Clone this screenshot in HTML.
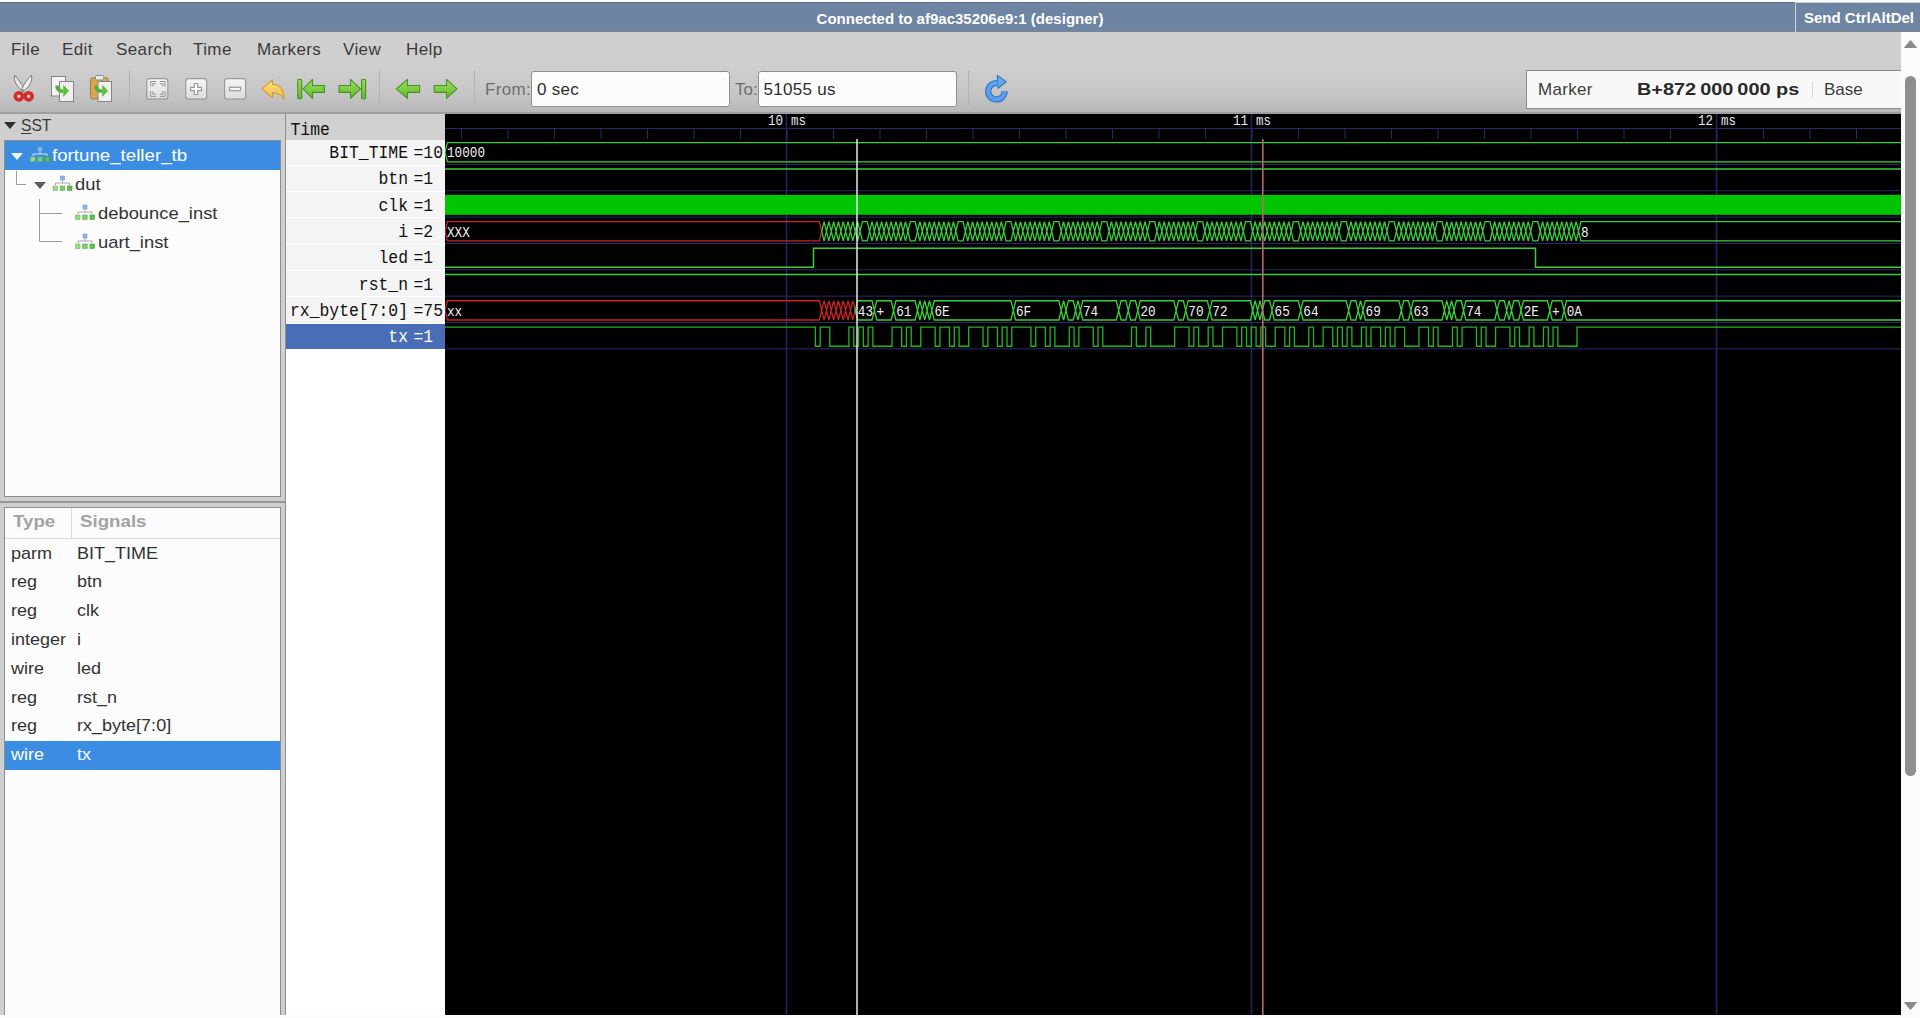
<!DOCTYPE html>
<html><head><meta charset="utf-8">
<style>
*{box-sizing:border-box}
html,body{margin:0;padding:0;width:1920px;height:1018px;overflow:hidden;background:#fbfbfb;font-family:"Liberation Sans",sans-serif}
.a{position:absolute}
#top{left:0;top:2px;width:1920px;height:30px;background:#6d84a3;border-top:1px solid #5b6f8c;border-bottom:1px solid #7d8593}
#title{left:0;top:3.5px;width:1920px;text-align:center;color:#fff;font-weight:bold;font-size:15px;line-height:30px}
#cad{left:1795px;top:2px;width:125px;height:30px;border-left:1px solid #c9d2de;border-top:1px solid #c9d2de;color:#fff;font-weight:bold;font-size:15px;line-height:29px;padding-left:8px}
#app{left:0;top:32px;width:1901px;height:983px;background:#cfcfcf;overflow:hidden}
#menu{left:0;top:0;width:1901px;height:34px;background:#cfcfcf}
.mi{top:6px;letter-spacing:0.4px;font-size:17px;color:#3a3a3a;line-height:24px}
#tb{left:0;top:34px;width:1901px;height:48px;background:linear-gradient(#cfcfcf,#c6c6c6 55%,#b8b8b8 96%,#9e9e9e 96%)}
.sepv{width:1px;background:#b4b4b4}
.entry{background:#fcfcfc;border:1px solid #8f8f8f;border-radius:3px;font-size:17px;color:#2e2e2e;line-height:36px;padding-left:5px;letter-spacing:0.3px}
.lbl{font-size:17px;color:#6d6d6d;line-height:24px}
#marker{left:1526px;top:38px;width:380px;height:39px;background:#f8f8f8;border:1px solid #8a8a8a;border-right:none}
/* left panes */
#sst{left:4px;top:81px;width:277px;height:27px;font-size:17px;color:#3a3a3a}
#tree{left:4px;top:108px;width:277px;height:357px;background:#fcfcfc;border:1px solid #8c8c8c;border-right:1px solid #8c8c8c}
.tr{font-size:17px;color:#333;line-height:24px;white-space:nowrap;transform:scaleX(1.08);transform-origin:0 0}
#sig{left:4px;top:474px;width:277px;height:509px;background:#fcfcfc;border:1px solid #8c8c8c}
.hdr{font-size:17px;color:#a3a3a3;font-weight:bold;transform:scaleX(1.1);transform-origin:0 0}
.srow{font-size:17px;color:#333;line-height:24px;transform:scaleX(1.06);transform-origin:0 0}
#names{left:286px;top:82px;width:159px;height:901px;background:#fff}
.nm{font-family:"Liberation Mono",monospace;font-size:16.4px;color:#111;white-space:pre;line-height:20px}
#wave{left:445px;top:82px;width:1456px;height:901px;background:#000}
svg text.bt{font-family:"Liberation Mono",monospace;font-size:12.7px;fill:#f0f0f0}
svg text.tl{font-family:"Liberation Mono",monospace;font-size:12.5px;fill:#e8e8e8}
#vs{left:1901px;top:32px;width:19px;height:986px;background:#fbfbfb}
</style></head><body>
<div id="top" class="a"></div>
<div id="title" class="a">Connected to af9ac35206e9:1 (designer)</div>
<div id="cad" class="a">Send CtrlAltDel</div>

<div id="app" class="a">
  <div id="menu" class="a">
    <div class="a mi" style="left:11px">File</div>
    <div class="a mi" style="left:62px">Edit</div>
    <div class="a mi" style="left:116px">Search</div>
    <div class="a mi" style="left:193px">Time</div>
    <div class="a mi" style="left:257px">Markers</div>
    <div class="a mi" style="left:343px">View</div>
    <div class="a mi" style="left:406px">Help</div>
  </div>
  <div id="tb" class="a">
    <svg class="a" style="left:0;top:0" width="1100" height="47" viewBox="0 66 1100 47"><defs><linearGradient id="gg" x1="0" y1="0" x2="0" y2="1"><stop offset="0" stop-color="#9be060"/><stop offset="1" stop-color="#62b82a"/></linearGradient><linearGradient id="zb" x1="0" y1="0" x2="0" y2="1"><stop offset="0" stop-color="#f6f6f6"/><stop offset="1" stop-color="#dcdcdc"/></linearGradient><linearGradient id="yb" x1="0" y1="0" x2="0" y2="1"><stop offset="0" stop-color="#fde08a"/><stop offset="1" stop-color="#f1b93a"/></linearGradient><linearGradient id="bl" x1="0" y1="0" x2="0" y2="1"><stop offset="0" stop-color="#7ab8f5"/><stop offset="1" stop-color="#3a86e0"/></linearGradient></defs><path d="M14.6 75.2C13.2 80.5 16.5 86.5 22.6 91.2L24.6 89.6C22.2 84.2 18.2 79 14.6 75.2Z" fill="#e4e4e4" stroke="#6f6f6f" stroke-width="0.9" stroke-linejoin="round"/><path d="M31.4 75.2C32.8 80.5 29.5 86.5 23.4 91.2L21.4 89.6C23.8 84.2 27.8 79 31.4 75.2Z" fill="#f0f0f0" stroke="#6f6f6f" stroke-width="0.9" stroke-linejoin="round"/><circle cx="23" cy="90.5" r="1.2" fill="#8a8a8a"/><circle cx="18.9" cy="96.3" r="3.6" fill="none" stroke="#d42a2a" stroke-width="3.6"/><circle cx="28.6" cy="96.3" r="3.6" fill="none" stroke="#d42a2a" stroke-width="3.6"/><circle cx="18.9" cy="96.3" r="1.3" fill="#f4c4c4"/><circle cx="28.6" cy="96.3" r="1.3" fill="#f4c4c4"/><rect x="51.5" y="76.5" width="14" height="19.5" fill="#f4f4f4" stroke="#858585"/><rect x="59.5" y="81.5" width="14" height="20" fill="#efefef" stroke="#858585"/><path d="M57 85.5Q57 91.2 63.2 91.2" fill="none" stroke="#4fb53a" stroke-width="3.6"/><path d="M63.6 85.6L68.7 90.9L63.6 96.2Z" fill="#5cc23a" stroke="#4a9f30" stroke-width="0.5" stroke-linejoin="round"/><rect x="90.5" y="78" width="17.5" height="20.8" rx="1.5" fill="#d9a550" stroke="#a57b3c"/><rect x="95.5" y="75.5" width="8.2" height="4.4" rx="1" fill="#ececec" stroke="#8a8a8a"/><rect x="98" y="81.5" width="13.5" height="20" fill="#efefef" stroke="#858585"/><path d="M96 85.5Q96 91.2 102.2 91.2" fill="none" stroke="#4fb53a" stroke-width="3.6"/><path d="M102.6 85.6L107.7 90.9L102.6 96.2Z" fill="#5cc23a" stroke="#4a9f30" stroke-width="0.5" stroke-linejoin="round"/><line x1="129.5" y1="70" x2="129.5" y2="107" stroke="#b2b2b2"/><line x1="379.5" y1="70" x2="379.5" y2="107" stroke="#b2b2b2"/><line x1="474.5" y1="70" x2="474.5" y2="107" stroke="#b2b2b2"/><line x1="968.5" y1="70" x2="968.5" y2="107" stroke="#b2b2b2"/><rect x="146.8" y="78.6" width="21" height="20.6" rx="2.8" fill="url(#zb)" stroke="#9a9a9a" stroke-width="1.2"/><path d="M151.8 86.6V82.6H156M159.9 82.6H164V86.6M164 91.2V95.3H159.9M156 95.3H151.8V91.2" fill="none" stroke="#8c8c8c" stroke-width="3.1" stroke-linejoin="miter"/><path d="M151.8 86.6V82.6H156M159.9 82.6H164V86.6M164 91.2V95.3H159.9M156 95.3H151.8V91.2" fill="none" stroke="#f6f6f6" stroke-width="1.1"/><rect x="185.7" y="78.6" width="21" height="20.6" rx="2.8" fill="url(#zb)" stroke="#9a9a9a" stroke-width="1.2"/><path d="M194.3 83.5H197.7V87.3H201.5V90.7H197.7V94.5H194.3V90.7H190.5V87.3H194.3Z" fill="#f8f8f8" stroke="#9a9a9a" stroke-width="1.2"/><rect x="224.6" y="78.6" width="21" height="20.6" rx="2.8" fill="url(#zb)" stroke="#9a9a9a" stroke-width="1.2"/><rect x="229.5" y="87.3" width="11" height="3.4" fill="#f8f8f8" stroke="#9a9a9a" stroke-width="1.2"/><path d="M262 88.6L272.5 79.8V84.3C279 84.3 284.5 89 283.8 99.3C282 94 278 92.8 272.5 92.8V98.2Z" fill="url(#yb)" stroke="#d39a24" stroke-width="1.1" stroke-linejoin="round"/><rect x="297.8" y="79.5" width="3.9" height="19.2" rx="0.8" fill="url(#gg)" stroke="#4b8f28" stroke-width="1.1"/><path d="M303 88.9L312.5 79.4V85.45H324.4V92.35000000000001H312.5V98.4Z" fill="url(#gg)" stroke="#4b8f28" stroke-width="1.1" stroke-linejoin="round"/><path d="M360.6 88.9L350.5 79.4V85.45H339V92.35000000000001H350.5V98.4Z" fill="url(#gg)" stroke="#4b8f28" stroke-width="1.1" stroke-linejoin="round"/><rect x="361.6" y="79.5" width="4" height="19.2" rx="0.8" fill="url(#gg)" stroke="#4b8f28" stroke-width="1.1"/><path d="M396.3 88.9L407.5 79.4V85.45H419.6V92.35000000000001H407.5V98.4Z" fill="url(#gg)" stroke="#4b8f28" stroke-width="1.1" stroke-linejoin="round"/><path d="M457 88.9L446.5 79.4V85.45H434.2V92.35000000000001H446.5V98.4Z" fill="url(#gg)" stroke="#4b8f28" stroke-width="1.1" stroke-linejoin="round"/><path d="M1004.6 91.3A8.2 8.2 0 1 1 997 83.1" fill="none" stroke="#3272c4" stroke-width="6.2"/><path d="M997.3 75.4L1006.2 81.7L998 88.2Z" fill="#66aaf0" stroke="#3272c4" stroke-width="1.1" stroke-linejoin="round"/><path d="M1004.6 91.3A8.2 8.2 0 1 1 997.5 83.1" fill="none" stroke="#5aa0ee" stroke-width="4"/></svg>
<div class="a lbl" style="left:485px;top:12px;letter-spacing:0.35px">From:</div>
<div class="a entry" style="left:531px;top:4.5px;width:199px;height:36px">0 sec</div>
<div class="a lbl" style="left:735px;top:12px">To:</div>
<div class="a entry" style="left:757.5px;top:4.5px;width:199px;height:36px">51055 us</div>
<div id="marker" class="a" style="top:4px">
  <div class="a lbl" style="left:11px;top:7px;color:#3c3c3c;letter-spacing:0.3px">Marker</div>
  <div class="a lbl" style="left:110px;top:7px;color:#2a2a2a;font-weight:bold;transform:scaleX(1.17);transform-origin:0 0">B+872&#8201;000&#8201;000 ps</div>
  <div class="a" style="left:285px;top:11px;width:1px;height:16px;background:#d8d8d8"></div>
  <div class="a lbl" style="left:297px;top:7px;color:#3c3c3c">Base</div>
</div>

  </div>
  <svg class="a" style="left:0;top:82px" width="40" height="26"><path d="M4 8H16L10 15Z" fill="#2e2e2e"/></svg><div class="a" style="left:20.5px;top:82px;font-size:17px;color:#3a3a3a;line-height:24px;transform:scaleX(0.92);transform-origin:0 0"><u style="text-decoration-thickness:1px;text-underline-offset:2px">S</u>ST</div><div class="a" style="left:4px;top:108px;width:277px;height:357px;background:#fcfcfc;border:1px solid #8d8d8d"></div><div class="a" style="left:5px;top:109px;width:275px;height:29px;background:#3b8de4"></div><svg class="a" style="left:0;top:0" width="290" height="500" viewBox="0 32 290 500"><path d="M11 153H23L17 160Z" fill="#f4f8ff"/><rect x="38" y="147" width="4" height="4" fill="#8fb6e8" stroke="#6a97d6" stroke-width="0.6"/><path d="M40 151V154M33 156V154H47V156" fill="none" stroke="#e6eefa" stroke-width="0.9"/><rect x="30.5" y="157" width="4.5" height="4.5" fill="#9cd88a" stroke="#6cc05a" stroke-width="0.6"/><rect x="37.7" y="157" width="4.5" height="4.5" fill="#7dcf6a" stroke="#58b048" stroke-width="0.6"/><rect x="45" y="157" width="4.5" height="4.5" fill="#5fc24e" stroke="#40a030" stroke-width="0.6"/><path d="M34 182H46L40 189Z" fill="#5a5a5a"/><rect x="60.5" y="176" width="4" height="4" fill="#8fb6e8" stroke="#6a97d6" stroke-width="0.6"/><path d="M62.5 180V183M55.5 185V183H69.5V185" fill="none" stroke="#a0a0a0" stroke-width="0.9"/><rect x="53.0" y="186" width="4.5" height="4.5" fill="#9cd88a" stroke="#6cc05a" stroke-width="0.6"/><rect x="60.2" y="186" width="4.5" height="4.5" fill="#7dcf6a" stroke="#58b048" stroke-width="0.6"/><rect x="67.5" y="186" width="4.5" height="4.5" fill="#5fc24e" stroke="#40a030" stroke-width="0.6"/><rect x="83" y="205" width="4" height="4" fill="#8fb6e8" stroke="#6a97d6" stroke-width="0.6"/><path d="M85 209V212M78 214V212H92V214" fill="none" stroke="#a0a0a0" stroke-width="0.9"/><rect x="75.5" y="215" width="4.5" height="4.5" fill="#9cd88a" stroke="#6cc05a" stroke-width="0.6"/><rect x="82.7" y="215" width="4.5" height="4.5" fill="#7dcf6a" stroke="#58b048" stroke-width="0.6"/><rect x="90" y="215" width="4.5" height="4.5" fill="#5fc24e" stroke="#40a030" stroke-width="0.6"/><rect x="83" y="234" width="4" height="4" fill="#8fb6e8" stroke="#6a97d6" stroke-width="0.6"/><path d="M85 238V241M78 243V241H92V243" fill="none" stroke="#a0a0a0" stroke-width="0.9"/><rect x="75.5" y="244" width="4.5" height="4.5" fill="#9cd88a" stroke="#6cc05a" stroke-width="0.6"/><rect x="82.7" y="244" width="4.5" height="4.5" fill="#7dcf6a" stroke="#58b048" stroke-width="0.6"/><rect x="90" y="244" width="4.5" height="4.5" fill="#5fc24e" stroke="#40a030" stroke-width="0.6"/><path d="M16.5 171V184.5H26" fill="none" stroke="#9a9a9a" stroke-width="1"/><path d="M39.5 199V241.5H62M39.5 213.5H62" fill="none" stroke="#9a9a9a" stroke-width="1"/></svg><div class="a tr" style="left:52px;top:112px;color:#fff;transform:scaleX(1.1)">fortune_teller_tb</div><div class="a tr" style="left:75px;top:141px">dut</div><div class="a tr" style="left:98px;top:170px">debounce_inst</div><div class="a tr" style="left:98px;top:199px">uart_inst</div><div class="a" style="left:0;top:469px;width:285px;height:2px;background:#969696"></div><div class="a" style="left:4px;top:475px;width:277px;height:510px;background:#fcfcfc;border:1px solid #8d8d8d"></div><div class="a" style="left:5px;top:506px;width:275px;height:1px;background:#dcdcdc"></div><div class="a" style="left:71px;top:476px;width:1px;height:30px;background:#dcdcdc"></div><div class="a hdr" style="left:13px;top:478px;line-height:24px">Type</div><div class="a hdr" style="left:80px;top:478px;line-height:24px">Signals</div><div class="a srow" style="left:11px;top:509.5px;color:#333">parm</div><div class="a srow" style="left:77px;top:509.5px;color:#333">BIT_TIME</div><div class="a srow" style="left:11px;top:538.3px;color:#333">reg</div><div class="a srow" style="left:77px;top:538.3px;color:#333">btn</div><div class="a srow" style="left:11px;top:567.1px;color:#333">reg</div><div class="a srow" style="left:77px;top:567.1px;color:#333">clk</div><div class="a srow" style="left:11px;top:595.9px;color:#333">integer</div><div class="a srow" style="left:77px;top:595.9px;color:#333">i</div><div class="a srow" style="left:11px;top:624.7px;color:#333">wire</div><div class="a srow" style="left:77px;top:624.7px;color:#333">led</div><div class="a srow" style="left:11px;top:653.5px;color:#333">reg</div><div class="a srow" style="left:77px;top:653.5px;color:#333">rst_n</div><div class="a srow" style="left:11px;top:682.3px;color:#333">reg</div><div class="a srow" style="left:77px;top:682.3px;color:#333">rx_byte[7:0]</div><div class="a" style="left:5px;top:709.1px;width:275px;height:28.8px;background:#3b8de4"></div><div class="a srow" style="left:11px;top:711.1px;color:#fff">wire</div><div class="a srow" style="left:77px;top:711.1px;color:#fff">tx</div><div class="a" style="left:285px;top:82px;width:1px;height:901px;background:#8d8d8d"></div>
  <div id="names" class="a"><div class="a" style="left:0;top:0;width:159px;height:26px;background:#d0d0d0"></div><div class="a nm" style="left:4.5px;top:7.5px;transform:scaleY(1.1);transform-origin:0 100%">Time</div><div class="a" style="left:0;top:25.60px;width:159px;height:25.29px;background:#f4f4f4"></div><div class="a nm" style="right:37px;top:31.20px;color:#111;text-align:right;transform:scaleY(1.12);transform-origin:0 100%">BIT_TIME</div><div class="a nm" style="left:127.5px;top:31.20px;color:#111;transform:scaleY(1.12);transform-origin:0 100%">=10</div><div class="a" style="left:0;top:51.89px;width:159px;height:25.29px;background:#f4f4f4"></div><div class="a nm" style="right:37px;top:57.49px;color:#111;text-align:right;transform:scaleY(1.12);transform-origin:0 100%">btn</div><div class="a nm" style="left:127.5px;top:57.49px;color:#111;transform:scaleY(1.12);transform-origin:0 100%">=1</div><div class="a" style="left:0;top:78.18px;width:159px;height:25.29px;background:#f4f4f4"></div><div class="a nm" style="right:37px;top:83.78px;color:#111;text-align:right;transform:scaleY(1.12);transform-origin:0 100%">clk</div><div class="a nm" style="left:127.5px;top:83.78px;color:#111;transform:scaleY(1.12);transform-origin:0 100%">=1</div><div class="a" style="left:0;top:104.47px;width:159px;height:25.29px;background:#f4f4f4"></div><div class="a nm" style="right:37px;top:110.07px;color:#111;text-align:right;transform:scaleY(1.12);transform-origin:0 100%">i</div><div class="a nm" style="left:127.5px;top:110.07px;color:#111;transform:scaleY(1.12);transform-origin:0 100%">=2</div><div class="a" style="left:0;top:130.76px;width:159px;height:25.29px;background:#f4f4f4"></div><div class="a nm" style="right:37px;top:136.36px;color:#111;text-align:right;transform:scaleY(1.12);transform-origin:0 100%">led</div><div class="a nm" style="left:127.5px;top:136.36px;color:#111;transform:scaleY(1.12);transform-origin:0 100%">=1</div><div class="a" style="left:0;top:157.05px;width:159px;height:25.29px;background:#f4f4f4"></div><div class="a nm" style="right:37px;top:162.65px;color:#111;text-align:right;transform:scaleY(1.12);transform-origin:0 100%">rst_n</div><div class="a nm" style="left:127.5px;top:162.65px;color:#111;transform:scaleY(1.12);transform-origin:0 100%">=1</div><div class="a" style="left:0;top:183.34px;width:159px;height:25.29px;background:#f4f4f4"></div><div class="a nm" style="right:37px;top:188.94px;color:#111;text-align:right;transform:scaleY(1.12);transform-origin:0 100%">rx_byte[7:0]</div><div class="a nm" style="left:127.5px;top:188.94px;color:#111;transform:scaleY(1.12);transform-origin:0 100%">=75</div><div class="a" style="left:0;top:209.63px;width:159px;height:25.29px;background:#4a6db8"></div><div class="a nm" style="right:37px;top:215.23px;color:#fff;text-align:right;transform:scaleY(1.12);transform-origin:0 100%">tx</div><div class="a nm" style="left:127.5px;top:215.23px;color:#fff;transform:scaleY(1.12);transform-origin:0 100%">=1</div></div>
  <div id="wave" class="a"><svg width="1456" height="901" viewBox="445 114 1456 901"><line x1="445" y1="128.5" x2="1901" y2="128.5" stroke="#2a2a6a" stroke-width="1"/><line x1="461.5" y1="128.5" x2="461.5" y2="139" stroke="#2a2a6a" stroke-width="1"/><line x1="508" y1="128.5" x2="508" y2="139" stroke="#2a2a6a" stroke-width="1"/><line x1="554.5" y1="128.5" x2="554.5" y2="139" stroke="#2a2a6a" stroke-width="1"/><line x1="601" y1="128.5" x2="601" y2="139" stroke="#2a2a6a" stroke-width="1"/><line x1="647.5" y1="128.5" x2="647.5" y2="139" stroke="#2a2a6a" stroke-width="1"/><line x1="694" y1="128.5" x2="694" y2="139" stroke="#2a2a6a" stroke-width="1"/><line x1="740.5" y1="128.5" x2="740.5" y2="139" stroke="#2a2a6a" stroke-width="1"/><line x1="787" y1="128.5" x2="787" y2="139" stroke="#2a2a6a" stroke-width="1"/><line x1="833.5" y1="128.5" x2="833.5" y2="139" stroke="#2a2a6a" stroke-width="1"/><line x1="880" y1="128.5" x2="880" y2="139" stroke="#2a2a6a" stroke-width="1"/><line x1="926.5" y1="128.5" x2="926.5" y2="139" stroke="#2a2a6a" stroke-width="1"/><line x1="973" y1="128.5" x2="973" y2="139" stroke="#2a2a6a" stroke-width="1"/><line x1="1019.5" y1="128.5" x2="1019.5" y2="139" stroke="#2a2a6a" stroke-width="1"/><line x1="1066" y1="128.5" x2="1066" y2="139" stroke="#2a2a6a" stroke-width="1"/><line x1="1112.5" y1="128.5" x2="1112.5" y2="139" stroke="#2a2a6a" stroke-width="1"/><line x1="1159" y1="128.5" x2="1159" y2="139" stroke="#2a2a6a" stroke-width="1"/><line x1="1205.5" y1="128.5" x2="1205.5" y2="139" stroke="#2a2a6a" stroke-width="1"/><line x1="1252" y1="128.5" x2="1252" y2="139" stroke="#2a2a6a" stroke-width="1"/><line x1="1298.5" y1="128.5" x2="1298.5" y2="139" stroke="#2a2a6a" stroke-width="1"/><line x1="1345" y1="128.5" x2="1345" y2="139" stroke="#2a2a6a" stroke-width="1"/><line x1="1391.5" y1="128.5" x2="1391.5" y2="139" stroke="#2a2a6a" stroke-width="1"/><line x1="1438" y1="128.5" x2="1438" y2="139" stroke="#2a2a6a" stroke-width="1"/><line x1="1484.5" y1="128.5" x2="1484.5" y2="139" stroke="#2a2a6a" stroke-width="1"/><line x1="1531" y1="128.5" x2="1531" y2="139" stroke="#2a2a6a" stroke-width="1"/><line x1="1577.5" y1="128.5" x2="1577.5" y2="139" stroke="#2a2a6a" stroke-width="1"/><line x1="1624" y1="128.5" x2="1624" y2="139" stroke="#2a2a6a" stroke-width="1"/><line x1="1670.5" y1="128.5" x2="1670.5" y2="139" stroke="#2a2a6a" stroke-width="1"/><line x1="1717" y1="128.5" x2="1717" y2="139" stroke="#2a2a6a" stroke-width="1"/><line x1="1763.5" y1="128.5" x2="1763.5" y2="139" stroke="#2a2a6a" stroke-width="1"/><line x1="1810" y1="128.5" x2="1810" y2="139" stroke="#2a2a6a" stroke-width="1"/><line x1="1856.5" y1="128.5" x2="1856.5" y2="139" stroke="#2a2a6a" stroke-width="1"/><line x1="786.5" y1="114" x2="786.5" y2="1015" stroke="#242460" stroke-width="1.6"/><line x1="1251.5" y1="114" x2="1251.5" y2="1015" stroke="#242460" stroke-width="1.6"/><line x1="1716.5" y1="114" x2="1716.5" y2="1015" stroke="#242460" stroke-width="1.6"/><line x1="445" y1="164.4" x2="1901" y2="164.4" stroke="#2a2a6a" stroke-width="1"/><line x1="445" y1="190.75" x2="1901" y2="190.75" stroke="#2a2a6a" stroke-width="1"/><line x1="445" y1="217.1" x2="1901" y2="217.1" stroke="#2a2a6a" stroke-width="1"/><line x1="445" y1="243.45" x2="1901" y2="243.45" stroke="#2a2a6a" stroke-width="1"/><line x1="445" y1="269.8" x2="1901" y2="269.8" stroke="#2a2a6a" stroke-width="1"/><line x1="445" y1="296.15" x2="1901" y2="296.15" stroke="#2a2a6a" stroke-width="1"/><line x1="445" y1="322.5" x2="1901" y2="322.5" stroke="#2a2a6a" stroke-width="1"/><line x1="445" y1="348.85" x2="1901" y2="348.85" stroke="#2a2a6a" stroke-width="1"/><path d="M445 152.28L447.4 142.65L1903.6 142.65L1906 152.28L1903.6 161.9L447.4 161.9Z" fill="none" stroke="#38d038" stroke-width="1.3"/><text transform="translate(447,157.47) scale(1,1.2)" class="bt">10000</text><line x1="445" y1="169.1" x2="1901" y2="169.1" stroke="#38d038" stroke-width="1.5"/><rect x="445" y="194.85" width="1456" height="19.95" fill="#00c400"/><path d="M445 231.33L447.4 221.7L819.3 221.7L821.7 231.33L819.3 240.95L447.4 240.95Z" fill="none" stroke="#cc2222" stroke-width="1.3"/><path d="M821.7 231.33L824.09 221.7L824.09 221.7L826.49 231.33L824.09 240.95L824.09 240.95ZM826.49 231.33L828.88 221.7L828.88 221.7L831.28 231.33L828.88 240.95L828.88 240.95ZM831.28 231.33L833.67 221.7L833.67 221.7L836.07 231.33L833.67 240.95L833.67 240.95ZM836.07 231.33L838.46 221.7L838.46 221.7L840.86 231.33L838.46 240.95L838.46 240.95ZM840.86 231.33L843.25 221.7L843.25 221.7L845.65 231.33L843.25 240.95L843.25 240.95ZM845.65 231.33L848.04 221.7L848.04 221.7L850.44 231.33L848.04 240.95L848.04 240.95ZM850.44 231.33L852.83 221.7L852.83 221.7L855.23 231.33L852.83 240.95L852.83 240.95ZM855.23 231.33L857.62 221.7L857.62 221.7L860.02 231.33L857.62 240.95L857.62 240.95ZM860.02 231.33L862.42 221.7L867.2 221.7L869.6 231.33L867.2 240.95L862.42 240.95ZM869.6 231.33L871.99 221.7L871.99 221.7L874.39 231.33L871.99 240.95L871.99 240.95ZM874.39 231.33L876.78 221.7L876.78 221.7L879.18 231.33L876.78 240.95L876.78 240.95ZM879.18 231.33L881.57 221.7L881.57 221.7L883.97 231.33L881.57 240.95L881.57 240.95ZM883.97 231.33L886.36 221.7L886.36 221.7L888.76 231.33L886.36 240.95L886.36 240.95ZM888.76 231.33L891.15 221.7L891.15 221.7L893.55 231.33L891.15 240.95L891.15 240.95ZM893.55 231.33L895.94 221.7L895.94 221.7L898.34 231.33L895.94 240.95L895.94 240.95ZM898.34 231.33L900.73 221.7L900.73 221.7L903.13 231.33L900.73 240.95L900.73 240.95ZM903.13 231.33L905.52 221.7L905.52 221.7L907.92 231.33L905.52 240.95L905.52 240.95ZM907.92 231.33L910.32 221.7L915.1 221.7L917.5 231.33L915.1 240.95L910.32 240.95ZM917.5 231.33L919.89 221.7L919.89 221.7L922.29 231.33L919.89 240.95L919.89 240.95ZM922.29 231.33L924.68 221.7L924.68 221.7L927.08 231.33L924.68 240.95L924.68 240.95ZM927.08 231.33L929.47 221.7L929.47 221.7L931.87 231.33L929.47 240.95L929.47 240.95ZM931.87 231.33L934.26 221.7L934.26 221.7L936.66 231.33L934.26 240.95L934.26 240.95ZM936.66 231.33L939.05 221.7L939.05 221.7L941.45 231.33L939.05 240.95L939.05 240.95ZM941.45 231.33L943.84 221.7L943.84 221.7L946.24 231.33L943.84 240.95L943.84 240.95ZM946.24 231.33L948.63 221.7L948.63 221.7L951.03 231.33L948.63 240.95L948.63 240.95ZM951.03 231.33L953.42 221.7L953.42 221.7L955.82 231.33L953.42 240.95L953.42 240.95ZM955.82 231.33L958.22 221.7L963 221.7L965.4 231.33L963 240.95L958.22 240.95ZM965.4 231.33L967.79 221.7L967.79 221.7L970.19 231.33L967.79 240.95L967.79 240.95ZM970.19 231.33L972.58 221.7L972.58 221.7L974.98 231.33L972.58 240.95L972.58 240.95ZM974.98 231.33L977.37 221.7L977.37 221.7L979.77 231.33L977.37 240.95L977.37 240.95ZM979.77 231.33L982.16 221.7L982.16 221.7L984.56 231.33L982.16 240.95L982.16 240.95ZM984.56 231.33L986.95 221.7L986.95 221.7L989.35 231.33L986.95 240.95L986.95 240.95ZM989.35 231.33L991.74 221.7L991.74 221.7L994.14 231.33L991.74 240.95L991.74 240.95ZM994.14 231.33L996.53 221.7L996.53 221.7L998.93 231.33L996.53 240.95L996.53 240.95ZM998.93 231.33L1001.32 221.7L1001.32 221.7L1003.72 231.33L1001.32 240.95L1001.32 240.95ZM1003.72 231.33L1006.12 221.7L1010.9 221.7L1013.3 231.33L1010.9 240.95L1006.12 240.95ZM1013.3 231.33L1015.69 221.7L1015.69 221.7L1018.09 231.33L1015.69 240.95L1015.69 240.95ZM1018.09 231.33L1020.48 221.7L1020.48 221.7L1022.88 231.33L1020.48 240.95L1020.48 240.95ZM1022.88 231.33L1025.27 221.7L1025.27 221.7L1027.67 231.33L1025.27 240.95L1025.27 240.95ZM1027.67 231.33L1030.07 221.7L1030.07 221.7L1032.46 231.33L1030.07 240.95L1030.07 240.95ZM1032.46 231.33L1034.86 221.7L1034.86 221.7L1037.25 231.33L1034.86 240.95L1034.86 240.95ZM1037.25 231.33L1039.64 221.7L1039.64 221.7L1042.04 231.33L1039.64 240.95L1039.64 240.95ZM1042.04 231.33L1044.43 221.7L1044.43 221.7L1046.83 231.33L1044.43 240.95L1044.43 240.95ZM1046.83 231.33L1049.22 221.7L1049.22 221.7L1051.62 231.33L1049.22 240.95L1049.22 240.95ZM1051.62 231.33L1054.02 221.7L1058.8 221.7L1061.2 231.33L1058.8 240.95L1054.02 240.95ZM1061.2 231.33L1063.6 221.7L1063.6 221.7L1065.99 231.33L1063.6 240.95L1063.6 240.95ZM1065.99 231.33L1068.38 221.7L1068.38 221.7L1070.78 231.33L1068.38 240.95L1068.38 240.95ZM1070.78 231.33L1073.17 221.7L1073.17 221.7L1075.57 231.33L1073.17 240.95L1073.17 240.95ZM1075.57 231.33L1077.97 221.7L1077.97 221.7L1080.36 231.33L1077.97 240.95L1077.97 240.95ZM1080.36 231.33L1082.76 221.7L1082.76 221.7L1085.15 231.33L1082.76 240.95L1082.76 240.95ZM1085.15 231.33L1087.55 221.7L1087.55 221.7L1089.94 231.33L1087.55 240.95L1087.55 240.95ZM1089.94 231.33L1092.34 221.7L1092.34 221.7L1094.73 231.33L1092.34 240.95L1092.34 240.95ZM1094.73 231.33L1097.12 221.7L1097.12 221.7L1099.52 231.33L1097.12 240.95L1097.12 240.95ZM1099.52 231.33L1101.92 221.7L1106.7 221.7L1109.1 231.33L1106.7 240.95L1101.92 240.95ZM1109.1 231.33L1111.49 221.7L1111.49 221.7L1113.89 231.33L1111.49 240.95L1111.49 240.95ZM1113.89 231.33L1116.28 221.7L1116.28 221.7L1118.68 231.33L1116.28 240.95L1116.28 240.95ZM1118.68 231.33L1121.07 221.7L1121.07 221.7L1123.47 231.33L1121.07 240.95L1121.07 240.95ZM1123.47 231.33L1125.86 221.7L1125.86 221.7L1128.26 231.33L1125.86 240.95L1125.86 240.95ZM1128.26 231.33L1130.65 221.7L1130.65 221.7L1133.05 231.33L1130.65 240.95L1130.65 240.95ZM1133.05 231.33L1135.44 221.7L1135.44 221.7L1137.84 231.33L1135.44 240.95L1135.44 240.95ZM1137.84 231.33L1140.23 221.7L1140.23 221.7L1142.63 231.33L1140.23 240.95L1140.23 240.95ZM1142.63 231.33L1145.02 221.7L1145.02 221.7L1147.42 231.33L1145.02 240.95L1145.02 240.95ZM1147.42 231.33L1149.82 221.7L1154.6 221.7L1157 231.33L1154.6 240.95L1149.82 240.95ZM1157 231.33L1159.39 221.7L1159.39 221.7L1161.79 231.33L1159.39 240.95L1159.39 240.95ZM1161.79 231.33L1164.18 221.7L1164.18 221.7L1166.58 231.33L1164.18 240.95L1164.18 240.95ZM1166.58 231.33L1168.97 221.7L1168.97 221.7L1171.37 231.33L1168.97 240.95L1168.97 240.95ZM1171.37 231.33L1173.76 221.7L1173.76 221.7L1176.16 231.33L1173.76 240.95L1173.76 240.95ZM1176.16 231.33L1178.56 221.7L1178.56 221.7L1180.95 231.33L1178.56 240.95L1178.56 240.95ZM1180.95 231.33L1183.35 221.7L1183.35 221.7L1185.74 231.33L1183.35 240.95L1183.35 240.95ZM1185.74 231.33L1188.13 221.7L1188.13 221.7L1190.53 231.33L1188.13 240.95L1188.13 240.95ZM1190.53 231.33L1192.92 221.7L1192.92 221.7L1195.32 231.33L1192.92 240.95L1192.92 240.95ZM1195.32 231.33L1197.72 221.7L1202.5 221.7L1204.9 231.33L1202.5 240.95L1197.72 240.95ZM1204.9 231.33L1207.29 221.7L1207.29 221.7L1209.69 231.33L1207.29 240.95L1207.29 240.95ZM1209.69 231.33L1212.08 221.7L1212.08 221.7L1214.48 231.33L1212.08 240.95L1212.08 240.95ZM1214.48 231.33L1216.87 221.7L1216.87 221.7L1219.27 231.33L1216.87 240.95L1216.87 240.95ZM1219.27 231.33L1221.66 221.7L1221.66 221.7L1224.06 231.33L1221.66 240.95L1221.66 240.95ZM1224.06 231.33L1226.45 221.7L1226.45 221.7L1228.85 231.33L1226.45 240.95L1226.45 240.95ZM1228.85 231.33L1231.24 221.7L1231.24 221.7L1233.64 231.33L1231.24 240.95L1231.24 240.95ZM1233.64 231.33L1236.03 221.7L1236.03 221.7L1238.43 231.33L1236.03 240.95L1236.03 240.95ZM1238.43 231.33L1240.82 221.7L1240.82 221.7L1243.22 231.33L1240.82 240.95L1240.82 240.95ZM1243.22 231.33L1245.62 221.7L1250.4 221.7L1252.8 231.33L1250.4 240.95L1245.62 240.95ZM1252.8 231.33L1255.19 221.7L1255.19 221.7L1257.59 231.33L1255.19 240.95L1255.19 240.95ZM1257.59 231.33L1259.98 221.7L1259.98 221.7L1262.38 231.33L1259.98 240.95L1259.98 240.95ZM1262.38 231.33L1264.77 221.7L1264.77 221.7L1267.17 231.33L1264.77 240.95L1264.77 240.95ZM1267.17 231.33L1269.57 221.7L1269.57 221.7L1271.96 231.33L1269.57 240.95L1269.57 240.95ZM1271.96 231.33L1274.36 221.7L1274.36 221.7L1276.75 231.33L1274.36 240.95L1274.36 240.95ZM1276.75 231.33L1279.14 221.7L1279.14 221.7L1281.54 231.33L1279.14 240.95L1279.14 240.95ZM1281.54 231.33L1283.93 221.7L1283.93 221.7L1286.33 231.33L1283.93 240.95L1283.93 240.95ZM1286.33 231.33L1288.72 221.7L1288.72 221.7L1291.12 231.33L1288.72 240.95L1288.72 240.95ZM1291.12 231.33L1293.52 221.7L1298.3 221.7L1300.7 231.33L1298.3 240.95L1293.52 240.95ZM1300.7 231.33L1303.1 221.7L1303.1 221.7L1305.49 231.33L1303.1 240.95L1303.1 240.95ZM1305.49 231.33L1307.88 221.7L1307.88 221.7L1310.28 231.33L1307.88 240.95L1307.88 240.95ZM1310.28 231.33L1312.67 221.7L1312.67 221.7L1315.07 231.33L1312.67 240.95L1312.67 240.95ZM1315.07 231.33L1317.47 221.7L1317.47 221.7L1319.86 231.33L1317.47 240.95L1317.47 240.95ZM1319.86 231.33L1322.26 221.7L1322.26 221.7L1324.65 231.33L1322.26 240.95L1322.26 240.95ZM1324.65 231.33L1327.05 221.7L1327.05 221.7L1329.44 231.33L1327.05 240.95L1327.05 240.95ZM1329.44 231.33L1331.84 221.7L1331.84 221.7L1334.23 231.33L1331.84 240.95L1331.84 240.95ZM1334.23 231.33L1336.62 221.7L1336.62 221.7L1339.02 231.33L1336.62 240.95L1336.62 240.95ZM1339.02 231.33L1341.42 221.7L1346.2 221.7L1348.6 231.33L1346.2 240.95L1341.42 240.95ZM1348.6 231.33L1350.99 221.7L1350.99 221.7L1353.39 231.33L1350.99 240.95L1350.99 240.95ZM1353.39 231.33L1355.78 221.7L1355.78 221.7L1358.18 231.33L1355.78 240.95L1355.78 240.95ZM1358.18 231.33L1360.57 221.7L1360.57 221.7L1362.97 231.33L1360.57 240.95L1360.57 240.95ZM1362.97 231.33L1365.36 221.7L1365.36 221.7L1367.76 231.33L1365.36 240.95L1365.36 240.95ZM1367.76 231.33L1370.15 221.7L1370.15 221.7L1372.55 231.33L1370.15 240.95L1370.15 240.95ZM1372.55 231.33L1374.94 221.7L1374.94 221.7L1377.34 231.33L1374.94 240.95L1374.94 240.95ZM1377.34 231.33L1379.73 221.7L1379.73 221.7L1382.13 231.33L1379.73 240.95L1379.73 240.95ZM1382.13 231.33L1384.52 221.7L1384.52 221.7L1386.92 231.33L1384.52 240.95L1384.52 240.95ZM1386.92 231.33L1389.32 221.7L1394.1 221.7L1396.5 231.33L1394.1 240.95L1389.32 240.95ZM1396.5 231.33L1398.89 221.7L1398.89 221.7L1401.29 231.33L1398.89 240.95L1398.89 240.95ZM1401.29 231.33L1403.68 221.7L1403.68 221.7L1406.08 231.33L1403.68 240.95L1403.68 240.95ZM1406.08 231.33L1408.47 221.7L1408.47 221.7L1410.87 231.33L1408.47 240.95L1408.47 240.95ZM1410.87 231.33L1413.26 221.7L1413.26 221.7L1415.66 231.33L1413.26 240.95L1413.26 240.95ZM1415.66 231.33L1418.05 221.7L1418.05 221.7L1420.45 231.33L1418.05 240.95L1418.05 240.95ZM1420.45 231.33L1422.84 221.7L1422.84 221.7L1425.24 231.33L1422.84 240.95L1422.84 240.95ZM1425.24 231.33L1427.63 221.7L1427.63 221.7L1430.03 231.33L1427.63 240.95L1427.63 240.95ZM1430.03 231.33L1432.42 221.7L1432.42 221.7L1434.82 231.33L1432.42 240.95L1432.42 240.95ZM1434.82 231.33L1437.22 221.7L1442 221.7L1444.4 231.33L1442 240.95L1437.22 240.95ZM1444.4 231.33L1446.79 221.7L1446.79 221.7L1449.19 231.33L1446.79 240.95L1446.79 240.95ZM1449.19 231.33L1451.58 221.7L1451.58 221.7L1453.98 231.33L1451.58 240.95L1451.58 240.95ZM1453.98 231.33L1456.37 221.7L1456.37 221.7L1458.77 231.33L1456.37 240.95L1456.37 240.95ZM1458.77 231.33L1461.16 221.7L1461.16 221.7L1463.56 231.33L1461.16 240.95L1461.16 240.95ZM1463.56 231.33L1465.95 221.7L1465.95 221.7L1468.35 231.33L1465.95 240.95L1465.95 240.95ZM1468.35 231.33L1470.74 221.7L1470.74 221.7L1473.14 231.33L1470.74 240.95L1470.74 240.95ZM1473.14 231.33L1475.53 221.7L1475.53 221.7L1477.93 231.33L1475.53 240.95L1475.53 240.95ZM1477.93 231.33L1480.32 221.7L1480.32 221.7L1482.72 231.33L1480.32 240.95L1480.32 240.95ZM1482.72 231.33L1485.12 221.7L1489.9 221.7L1492.3 231.33L1489.9 240.95L1485.12 240.95ZM1492.3 231.33L1494.69 221.7L1494.69 221.7L1497.09 231.33L1494.69 240.95L1494.69 240.95ZM1497.09 231.33L1499.48 221.7L1499.48 221.7L1501.88 231.33L1499.48 240.95L1499.48 240.95ZM1501.88 231.33L1504.27 221.7L1504.27 221.7L1506.67 231.33L1504.27 240.95L1504.27 240.95ZM1506.67 231.33L1509.07 221.7L1509.07 221.7L1511.46 231.33L1509.07 240.95L1509.07 240.95ZM1511.46 231.33L1513.86 221.7L1513.86 221.7L1516.25 231.33L1513.86 240.95L1513.86 240.95ZM1516.25 231.33L1518.64 221.7L1518.64 221.7L1521.04 231.33L1518.64 240.95L1518.64 240.95ZM1521.04 231.33L1523.43 221.7L1523.43 221.7L1525.83 231.33L1523.43 240.95L1523.43 240.95ZM1525.83 231.33L1528.22 221.7L1528.22 221.7L1530.62 231.33L1528.22 240.95L1528.22 240.95ZM1530.62 231.33L1533.02 221.7L1537.8 221.7L1540.2 231.33L1537.8 240.95L1533.02 240.95ZM1540.2 231.33L1542.6 221.7L1542.6 221.7L1544.99 231.33L1542.6 240.95L1542.6 240.95ZM1544.99 231.33L1547.38 221.7L1547.38 221.7L1549.78 231.33L1547.38 240.95L1547.38 240.95ZM1549.78 231.33L1552.17 221.7L1552.17 221.7L1554.57 231.33L1552.17 240.95L1552.17 240.95ZM1554.57 231.33L1556.97 221.7L1556.97 221.7L1559.36 231.33L1556.97 240.95L1556.97 240.95ZM1559.36 231.33L1561.76 221.7L1561.76 221.7L1564.15 231.33L1561.76 240.95L1561.76 240.95ZM1564.15 231.33L1566.55 221.7L1566.55 221.7L1568.94 231.33L1566.55 240.95L1566.55 240.95ZM1568.94 231.33L1571.34 221.7L1571.34 221.7L1573.73 231.33L1571.34 240.95L1571.34 240.95ZM1573.73 231.33L1576.12 221.7L1576.12 221.7L1578.52 231.33L1576.12 240.95L1576.12 240.95ZM1578.52 231.33L1580.92 221.7L1903.6 221.7L1906 231.33L1903.6 240.95L1580.92 240.95Z" fill="none" stroke="#38d038" stroke-width="1.3"/><text transform="translate(447,236.53) scale(1,1.2)" class="bt">XXX</text><text transform="translate(1581.12,236.53) scale(1,1.2)" class="bt">8</text><path d="M445 267.2H813.5V248.15H1535.5V267.2H1901" fill="none" stroke="#38d038" stroke-width="1.5"/><line x1="445" y1="274.5" x2="1901" y2="274.5" stroke="#38d038" stroke-width="1.5"/><path d="M445 310.38L447.4 300.75L819.3 300.75L821.7 310.38L819.3 320L447.4 320ZM821.7 310.38L824.09 300.75L824.09 300.75L826.49 310.38L824.09 320L824.09 320ZM826.49 310.38L828.88 300.75L828.88 300.75L831.28 310.38L828.88 320L828.88 320ZM831.28 310.38L833.67 300.75L833.67 300.75L836.07 310.38L833.67 320L833.67 320ZM836.07 310.38L838.46 300.75L838.46 300.75L840.86 310.38L838.46 320L838.46 320ZM840.86 310.38L843.25 300.75L843.25 300.75L845.65 310.38L843.25 320L843.25 320ZM845.65 310.38L848.04 300.75L848.04 300.75L850.44 310.38L848.04 320L848.04 320ZM850.44 310.38L852.83 300.75L852.83 300.75L855.23 310.38L852.83 320L852.83 320Z" fill="none" stroke="#cc2222" stroke-width="1.3"/><path d="M855.23 310.38L857.63 300.75L871.99 300.75L874.39 310.38L871.99 320L857.63 320ZM874.39 310.38L876.79 300.75L891.15 300.75L893.55 310.38L891.15 320L876.79 320ZM893.55 310.38L895.95 300.75L915.1 300.75L917.5 310.38L915.1 320L895.95 320ZM917.5 310.38L919.89 300.75L919.89 300.75L922.29 310.38L919.89 320L919.89 320ZM922.29 310.38L924.68 300.75L924.68 300.75L927.08 310.38L924.68 320L924.68 320ZM927.08 310.38L929.47 300.75L929.47 300.75L931.87 310.38L929.47 320L929.47 320ZM931.87 310.38L934.27 300.75L1010.9 300.75L1013.3 310.38L1010.9 320L934.27 320ZM1013.3 310.38L1015.7 300.75L1058.8 300.75L1061.2 310.38L1058.8 320L1015.7 320ZM1061.2 310.38L1063.6 300.75L1063.6 300.75L1065.99 310.38L1063.6 320L1063.6 320ZM1065.99 310.38L1068.39 300.75L1073.17 300.75L1075.57 310.38L1073.17 320L1068.39 320ZM1075.57 310.38L1077.97 300.75L1077.97 300.75L1080.36 310.38L1077.97 320L1077.97 320ZM1080.36 310.38L1082.76 300.75L1116.28 300.75L1118.68 310.38L1116.28 320L1082.76 320ZM1118.68 310.38L1121.08 300.75L1125.86 300.75L1128.26 310.38L1125.86 320L1121.08 320ZM1128.26 310.38L1130.66 300.75L1135.44 300.75L1137.84 310.38L1135.44 320L1130.66 320ZM1137.84 310.38L1140.24 300.75L1173.76 300.75L1176.16 310.38L1173.76 320L1140.24 320ZM1176.16 310.38L1178.56 300.75L1183.34 300.75L1185.74 310.38L1183.34 320L1178.56 320ZM1185.74 310.38L1188.14 300.75L1207.29 300.75L1209.69 310.38L1207.29 320L1188.14 320ZM1209.69 310.38L1212.09 300.75L1250.4 300.75L1252.8 310.38L1250.4 320L1212.09 320ZM1252.8 310.38L1255.19 300.75L1255.19 300.75L1257.59 310.38L1255.19 320L1255.19 320ZM1257.59 310.38L1259.98 300.75L1259.98 300.75L1262.38 310.38L1259.98 320L1259.98 320ZM1262.38 310.38L1264.78 300.75L1269.56 300.75L1271.96 310.38L1269.56 320L1264.78 320ZM1271.96 310.38L1274.36 300.75L1298.3 300.75L1300.7 310.38L1298.3 320L1274.36 320ZM1300.7 310.38L1303.1 300.75L1346.2 300.75L1348.6 310.38L1346.2 320L1303.1 320ZM1348.6 310.38L1351 300.75L1355.78 300.75L1358.18 310.38L1355.78 320L1351 320ZM1358.18 310.38L1360.57 300.75L1360.57 300.75L1362.97 310.38L1360.57 320L1360.57 320ZM1362.97 310.38L1365.37 300.75L1398.89 300.75L1401.29 310.38L1398.89 320L1365.37 320ZM1401.29 310.38L1403.69 300.75L1408.47 300.75L1410.87 310.38L1408.47 320L1403.69 320ZM1410.87 310.38L1413.27 300.75L1442 300.75L1444.4 310.38L1442 320L1413.27 320ZM1444.4 310.38L1446.79 300.75L1446.79 300.75L1449.19 310.38L1446.79 320L1446.79 320ZM1449.19 310.38L1451.58 300.75L1451.58 300.75L1453.98 310.38L1451.58 320L1451.58 320ZM1453.98 310.38L1456.38 300.75L1461.16 300.75L1463.56 310.38L1461.16 320L1456.38 320ZM1463.56 310.38L1465.96 300.75L1494.69 300.75L1497.09 310.38L1494.69 320L1465.96 320ZM1497.09 310.38L1499.49 300.75L1504.27 300.75L1506.67 310.38L1504.27 320L1499.49 320ZM1506.67 310.38L1509.07 300.75L1509.07 300.75L1511.46 310.38L1509.07 320L1509.07 320ZM1511.46 310.38L1513.86 300.75L1518.64 300.75L1521.04 310.38L1518.64 320L1513.86 320ZM1521.04 310.38L1523.44 300.75L1547.38 300.75L1549.78 310.38L1547.38 320L1523.44 320ZM1549.78 310.38L1552.18 300.75L1561.75 300.75L1564.15 310.38L1561.75 320L1552.18 320ZM1564.15 310.38L1566.55 300.75L1903.6 300.75L1906 310.38L1903.6 320L1566.55 320Z" fill="none" stroke="#38d038" stroke-width="1.3"/><text transform="translate(447,315.57) scale(1,1.2)" class="bt">xx</text><text transform="translate(857.83,315.57) scale(1,1.2)" class="bt">43</text><text transform="translate(876.59,315.57) scale(1,1.2)" class="bt">+</text><text transform="translate(896.15,315.57) scale(1,1.2)" class="bt">61</text><text transform="translate(934.47,315.57) scale(1,1.2)" class="bt">6E</text><text transform="translate(1015.9,315.57) scale(1,1.2)" class="bt">6F</text><text transform="translate(1082.96,315.57) scale(1,1.2)" class="bt">74</text><text transform="translate(1140.44,315.57) scale(1,1.2)" class="bt">20</text><text transform="translate(1188.34,315.57) scale(1,1.2)" class="bt">70</text><text transform="translate(1212.29,315.57) scale(1,1.2)" class="bt">72</text><text transform="translate(1274.56,315.57) scale(1,1.2)" class="bt">65</text><text transform="translate(1303.3,315.57) scale(1,1.2)" class="bt">64</text><text transform="translate(1365.57,315.57) scale(1,1.2)" class="bt">69</text><text transform="translate(1413.47,315.57) scale(1,1.2)" class="bt">63</text><text transform="translate(1466.16,315.57) scale(1,1.2)" class="bt">74</text><text transform="translate(1523.64,315.57) scale(1,1.2)" class="bt">2E</text><text transform="translate(1551.98,315.57) scale(1,1.2)" class="bt">+</text><text transform="translate(1566.75,315.57) scale(1,1.2)" class="bt">0A</text><path d="M445 327.2H815.4V346.25H820.19V327.2H829.77V346.25H848.93V327.2H853.72V346.25H858.51V327.2H863.3V346.25H868.09V327.2H872.88V346.25H892.04V327.2H901.62V346.25H906.41V327.2H911.2V346.25H920.78V327.2H935.15V346.25H939.94V327.2H949.52V346.25H954.31V327.2H959.1V346.25H968.68V327.2H983.05V346.25H987.84V327.2H997.42V346.25H1002.21V327.2H1007V346.25H1011.79V327.2H1030.95V346.25H1035.74V327.2H1045.32V346.25H1050.11V327.2H1054.9V346.25H1069.27V327.2H1074.06V346.25H1078.85V327.2H1093.22V346.25H1098.01V327.2H1102.8V346.25H1131.54V327.2H1136.33V346.25H1145.91V327.2H1150.7V346.25H1174.65V327.2H1189.02V346.25H1193.81V327.2H1198.6V346.25H1208.18V327.2H1212.97V346.25H1222.55V327.2H1236.92V346.25H1241.71V327.2H1246.5V346.25H1251.29V327.2H1256.08V346.25H1260.87V327.2H1265.66V346.25H1275.24V327.2H1284.82V346.25H1289.61V327.2H1294.4V346.25H1308.77V327.2H1313.56V346.25H1323.14V327.2H1332.72V346.25H1337.51V327.2H1342.3V346.25H1347.09V327.2H1351.88V346.25H1361.46V327.2H1366.25V346.25H1371.04V327.2H1380.62V346.25H1385.41V327.2H1390.2V346.25H1394.99V327.2H1404.57V346.25H1418.94V327.2H1428.52V346.25H1433.31V327.2H1438.1V346.25H1452.47V327.2H1457.26V346.25H1462.05V327.2H1476.42V346.25H1481.21V327.2H1486V346.25H1495.58V327.2H1509.95V346.25H1514.74V327.2H1519.53V346.25H1529.11V327.2H1533.9V346.25H1543.48V327.2H1548.27V346.25H1553.06V327.2H1557.85V346.25H1577.01V327.2H1901" fill="none" stroke="#22b522" stroke-width="1.3"/><line x1="857" y1="139" x2="857" y2="1015" stroke="#e8e8e8" stroke-width="1.5"/><line x1="1262.8" y1="139" x2="1262.8" y2="1015" stroke="#bc6868" stroke-width="1.6"/><text transform="translate(783,125.4) scale(1,1.22)" class="tl" text-anchor="end">10</text><text transform="translate(791,125.4) scale(1,1.22)" class="tl">ms</text><text transform="translate(1248,125.4) scale(1,1.22)" class="tl" text-anchor="end">11</text><text transform="translate(1256,125.4) scale(1,1.22)" class="tl">ms</text><text transform="translate(1713,125.4) scale(1,1.22)" class="tl" text-anchor="end">12</text><text transform="translate(1721,125.4) scale(1,1.22)" class="tl">ms</text></svg></div>
</div>
<div id="vs" class="a"><svg class="a" style="left:0;top:0" width="19" height="986" viewBox="1901 32 19 986">
<path d="M1904.5 47.5L1910.5 40.5L1916.5 47.5Z" fill="#8a8a8a" stroke="#8a8a8a" stroke-linejoin="round"/>
<rect x="1905" y="76" width="11" height="700" rx="5.5" fill="#8e8e8e"/>
<path d="M1904.5 1002.5L1910.5 1009.5L1916.5 1002.5Z" fill="#8a8a8a" stroke="#8a8a8a" stroke-linejoin="round"/>
</svg></div>
</body></html>
